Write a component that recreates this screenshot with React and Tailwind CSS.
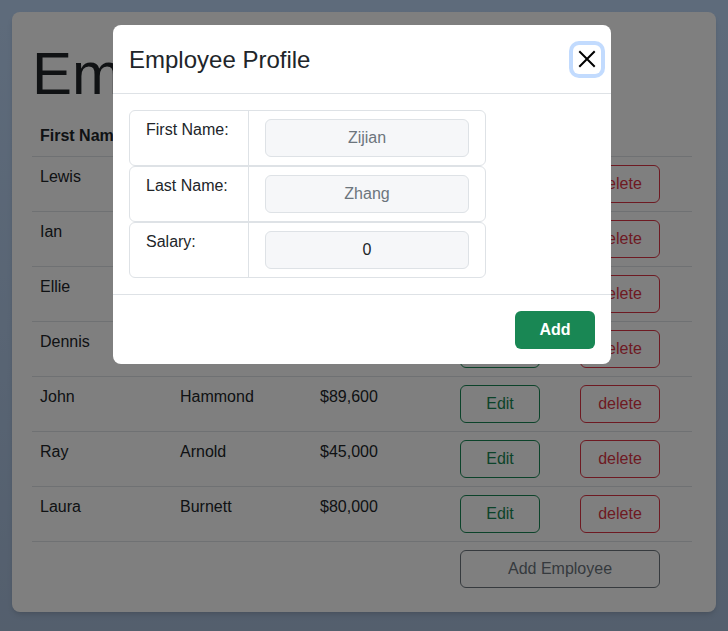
import { useState } from 'react';

const employees = [
  { first: 'Lewis', last: 'Dodgson', salary: '$52,000' },
  { first: 'Ian', last: 'Malcolm', salary: '$70,000' },
  { first: 'Ellie', last: 'Sattler', salary: '$72,500' },
  { first: 'Dennis', last: 'Nedry', salary: '$38,000' },
  { first: 'John', last: 'Hammond', salary: '$89,600' },
  { first: 'Ray', last: 'Arnold', salary: '$45,000' },
  { first: 'Laura', last: 'Burnett', salary: '$80,000' }
];

function ProfileRow({ label, value, placeholder }) {
  return (
    <div className="flex h-[56px] w-[357px] rounded-[6px] border border-[#dee2e6]">
      <div className="w-[119px] border-r border-[#dee2e6] px-4 pt-[7px] text-[#212529]">{label}</div>
      <div className="flex-1 px-4 py-2">
        <input
          readOnly
          value={value}
          placeholder={placeholder}
          className="h-[38px] w-full rounded-[6px] border border-[#dee2e6] bg-[#f6f7f9] text-center text-[#212529] placeholder:text-[#6c757d] outline-none"
        />
      </div>
    </div>
  );
}

export default function App() {
  const [open] = useState(true);

  return (
    <div className="relative h-screen bg-gradient-to-b from-[#bdd7f7] to-[#a8bedb] p-3 font-['Liberation_Sans',Arial,sans-serif] text-base text-[#212529]">
      <div className="h-[600px] rounded-lg bg-white px-5 pt-[26px] shadow-md">
        <h1 className="mb-[6px] text-[60px] font-light leading-[72px]">Employees</h1>
        <table className="w-[660px] table-fixed border-collapse text-left">
          <thead>
            <tr className="border-b border-[#dee2e6]">
              <th className="w-[140px] px-2 py-2 font-bold leading-6">First Name</th>
              <th className="w-[140px] px-2 py-2 font-bold leading-6">Last Name</th>
              <th className="w-[140px] px-2 py-2 font-bold leading-6">Salary</th>
              <th className="w-[120px] px-2 py-2"></th>
              <th className="w-[120px] px-2 py-2"></th>
            </tr>
          </thead>
          <tbody>
            {employees.map((e) => (
              <tr key={e.first} className="border-b border-[#dee2e6] align-top">
                <td className="px-2 py-2 leading-6">{e.first}</td>
                <td className="px-2 py-2 leading-6">{e.last}</td>
                <td className="px-2 py-2 leading-6">{e.salary}</td>
                <td className="px-2 pt-[8px] pb-2">
                  <button className="h-[38px] w-[80px] rounded-[6px] border border-[#198754] text-[#198754]">Edit</button>
                </td>
                <td className="px-2 pt-[8px] pb-2">
                  <button className="h-[38px] w-[80px] rounded-[6px] border border-[#dc3545] text-[#dc3545]">delete</button>
                </td>
              </tr>
            ))}
            <tr>
              <td></td>
              <td></td>
              <td></td>
              <td colSpan={2} className="px-2 py-2">
                <button className="h-[38px] w-[200px] rounded-[6px] border border-[#6c757d] text-[#6c757d]">Add Employee</button>
              </td>
            </tr>
          </tbody>
        </table>
      </div>

      {open && (
        <div className="fixed inset-0 flex bg-black/50 pl-[113px] pt-[25px]">
          <div className="h-[339px] w-[498px] rounded-lg bg-white">
            <div className="flex h-[69px] items-center justify-between border-b border-[#dee2e6] pl-[16px] pr-[10px]">
              <h4 className="text-[24px] leading-[29px] text-[#212529]">Employee Profile</h4>
              <button className="flex h-[29px] w-[28px] items-center justify-center rounded-[6px] bg-white ring-4 ring-[#0d6efd]/25">
                <svg width="18" height="18" viewBox="0 0 18 18" fill="none" stroke="#000" strokeWidth="2" strokeLinecap="square">
                  <path d="M2 2 L16 16 M16 2 L2 16" />
                </svg>
              </button>
            </div>
            <div className="flex flex-col border-b border-[#dee2e6] px-4 py-4">
              <ProfileRow label="First Name:" value="" placeholder="Zijian" />
              <ProfileRow label="Last Name:" value="" placeholder="Zhang" />
              <ProfileRow label="Salary:" value="0" placeholder="" />
            </div>
            <div className="flex justify-end px-4 py-4">
              <button className="h-[38px] w-[80px] rounded-[6px] bg-[#198754] font-bold text-white">Add</button>
            </div>
          </div>
        </div>
      )}
    </div>
  );
}
